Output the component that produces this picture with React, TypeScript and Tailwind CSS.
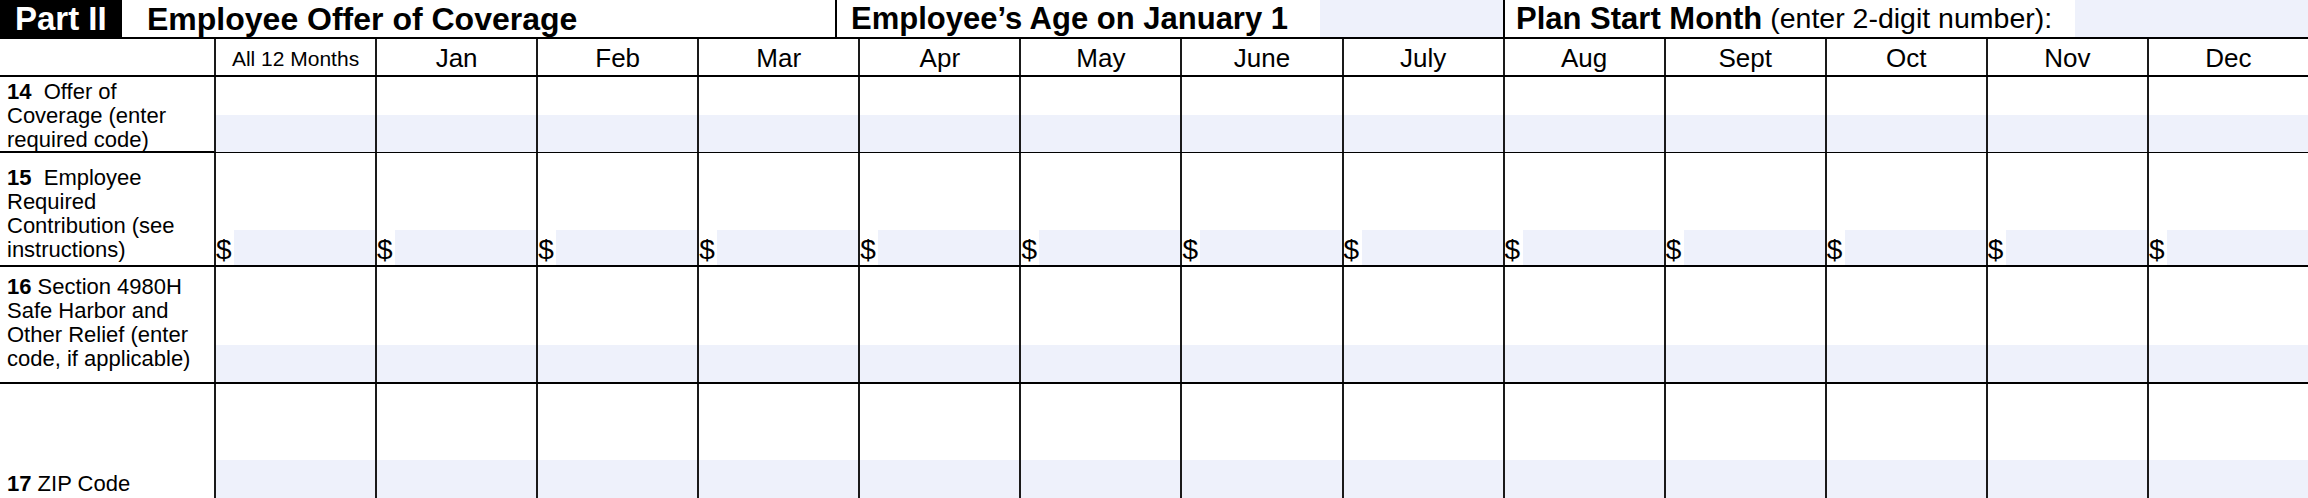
import React from "react";

const months = ["Jan", "Feb", "Mar", "Apr", "May", "June", "July", "Aug", "Sept", "Oct", "Nov", "Dec"];
const cols = ["All 12 Months", ...months];

const GRID = "grid grid-cols-[214px_repeat(13,minmax(0,1fr))]";
const SHADE = "bg-[#eef1fb]";

function Label({ lines, num, gap }: { lines: string[]; num: string; gap?: boolean }) {
  return (
    <div className="text-[22px] leading-[24px] whitespace-nowrap">
      {lines.map((l, i) => (
        <div key={i}>
          {i === 0 ? (
            <>
              <span className="font-bold">{num}</span>
              {gap ? "\u00a0 " : " "}
              {l}
            </>
          ) : (
            l
          )}
        </div>
      ))}
    </div>
  );
}

export default function App() {
  return (
    <div className="w-[2308px] h-[498px] overflow-hidden bg-white text-black font-['Liberation_Sans',Arial,sans-serif]">
      {/* Header */}
      <div className="flex h-[39px] border-b-2 border-black">
        <div className="w-[122px] bg-black text-white font-bold text-[33px] leading-none flex items-center pl-[15px] whitespace-nowrap">
          Part II
        </div>
        <div className="w-[713px] flex items-center pl-[25px] font-bold text-[32px] leading-none whitespace-nowrap">
          Employee Offer of Coverage
        </div>
        <div className="w-[485px] border-l-2 border-black flex items-center pl-[14px] font-bold text-[31px] leading-none whitespace-nowrap">
          Employee’s Age on January 1
        </div>
        <div className={`w-[183px] ${SHADE}`} />
        <div className="w-[572px] border-l-2 border-black flex items-center pl-[11px] leading-none whitespace-nowrap">
          <span className="font-bold text-[31px]">Plan Start Month</span>
          <span className="text-[28.5px]">&nbsp;(enter 2-digit number):</span>
        </div>
        <div className={`flex-1 ${SHADE}`} />
      </div>

      {/* Column headers */}
      <div className={`${GRID} h-[38px] border-b-2 border-black`}>
        <div />
        {cols.map((c, i) => (
          <div
            key={c}
            className={`border-l-2 border-[#1a1a1a] flex items-center justify-center pt-[2px] leading-none ${
              i === 0 ? "text-[21px]" : "text-[26px]"
            }`}
          >
            {c}
          </div>
        ))}
      </div>

      {/* Row 14 */}
      <div className={`${GRID} h-[76px] border-b-2 border-black`}>
        <div className="pl-[7px] pt-[3px]">
          <Label num="14" gap lines={["Offer of", "Coverage (enter", "required code)"]} />
        </div>
        {cols.map((c) => (
          <div key={c} className="border-l-2 border-[#1a1a1a] flex flex-col justify-end">
            <div className={`h-[37px] ${SHADE}`} />
          </div>
        ))}
      </div>

      {/* Row 15 */}
      <div className={`${GRID} h-[114px] border-b-2 border-black`}>
        <div className="pl-[7px] pb-[3px] flex flex-col justify-end">
          <Label num="15" gap lines={["Employee", "Required", "Contribution (see", "instructions)"]} />
        </div>
        {cols.map((c) => (
          <div key={c} className="border-l-2 border-[#1a1a1a] flex items-end">
            <div className="w-[18px] h-[35px] flex items-end text-[28px] leading-none pb-[1px]">$</div>
            <div className={`flex-1 h-[35px] ${SHADE}`} />
          </div>
        ))}
      </div>

      {/* Row 16 */}
      <div className={`${GRID} h-[117px] border-b-2 border-black`}>
        <div className="pl-[7px] pt-[8px]">
          <Label num="16" lines={["Section 4980H", "Safe Harbor and", "Other Relief (enter", "code, if applicable)"]} />
        </div>
        {cols.map((c) => (
          <div key={c} className="border-l-2 border-[#1a1a1a] flex flex-col justify-end">
            <div className={`h-[37px] ${SHADE}`} />
          </div>
        ))}
      </div>

      {/* Row 17 */}
      <div className={`${GRID} h-[114px]`}>
        <div className="pl-[7px] pt-[88px]">
          <Label num="17" lines={["ZIP Code"]} />
        </div>
        {cols.map((c) => (
          <div key={c} className="border-l-2 border-[#1a1a1a] flex flex-col justify-end">
            <div className={`h-[38px] ${SHADE}`} />
          </div>
        ))}
      </div>
    </div>
  );
}
